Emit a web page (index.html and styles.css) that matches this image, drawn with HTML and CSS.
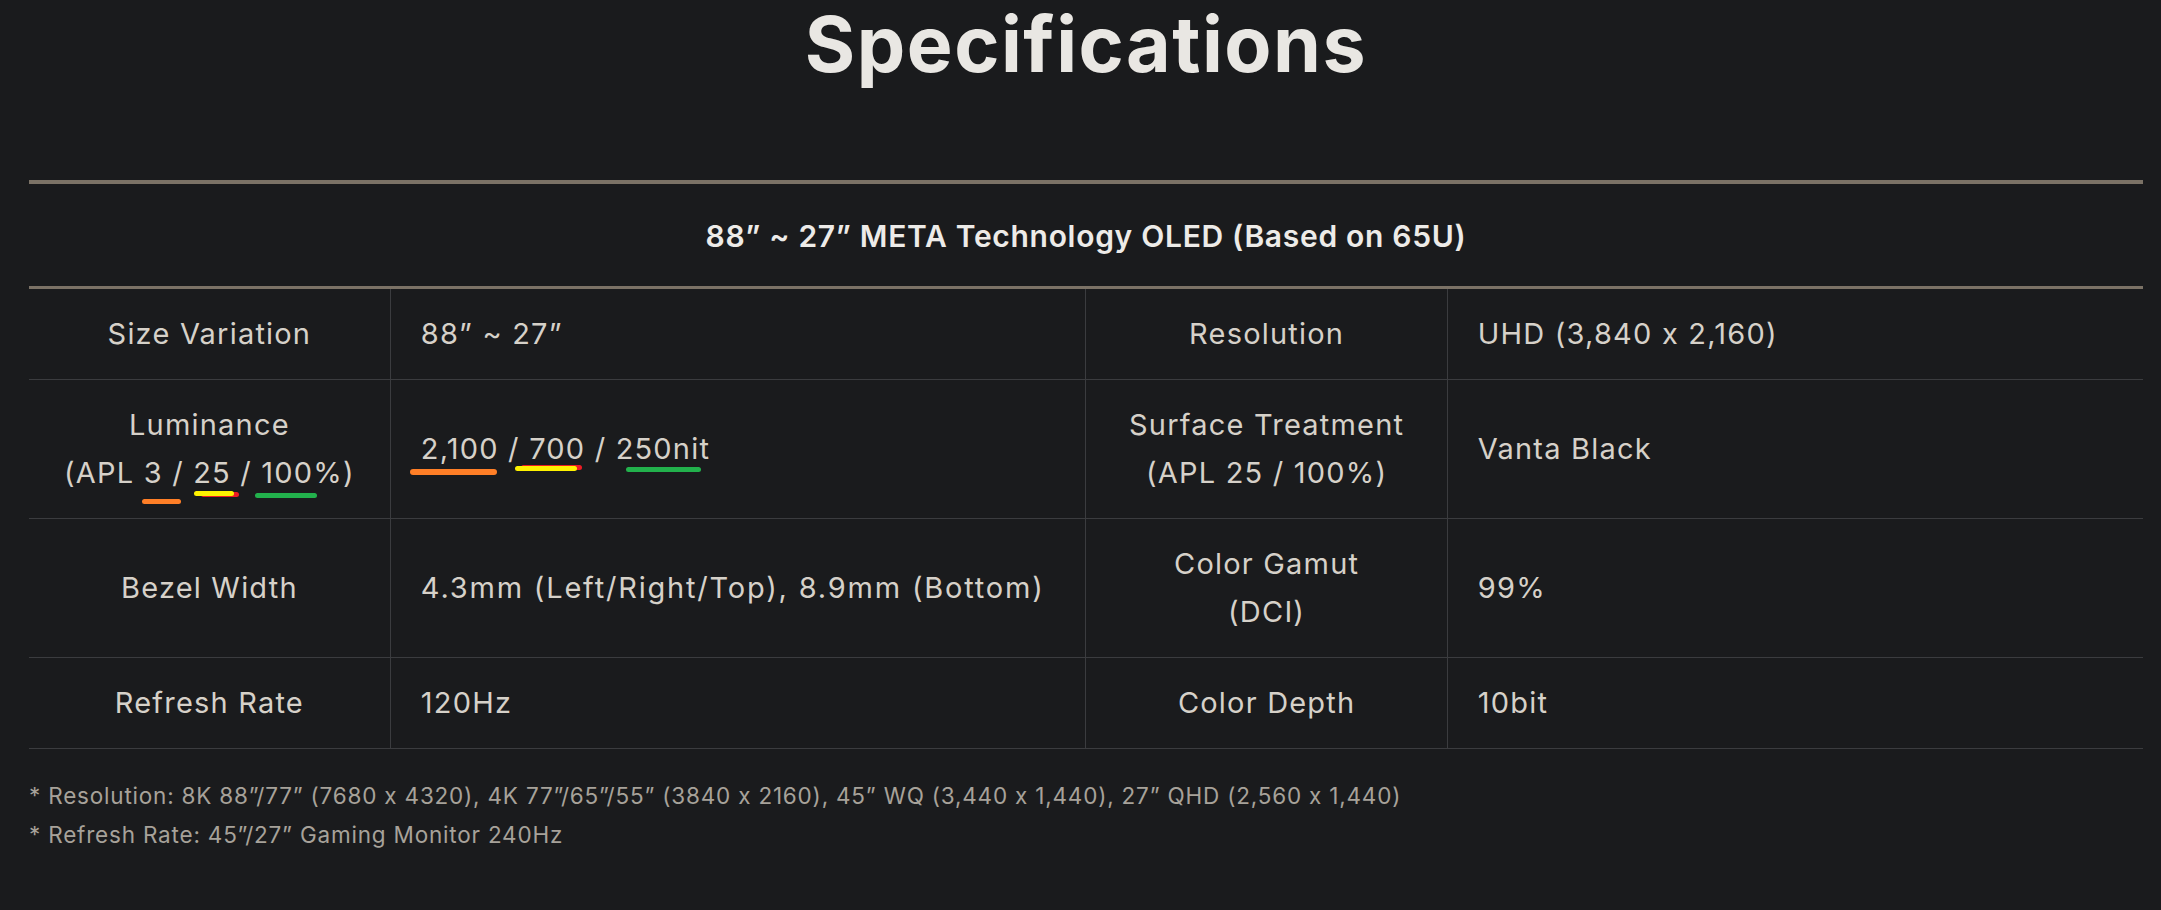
FILE: index.html
```html
<!DOCTYPE html>
<html lang="en">
<head>
<meta charset="utf-8">
<title>Specifications</title>
<link rel="stylesheet" href="styles.css">
</head>
<body>
<main class="page">
  <h1 class="title">Specifications</h1>
  <table class="spec">
    <colgroup>
      <col class="c-label"><col class="c-value"><col class="c-label"><col class="c-value">
    </colgroup>
    <thead>
      <tr><th colspan="4" class="head">88” ~ 27” META Technology OLED (Based on 65U)</th></tr>
    </thead>
    <tbody>
      <tr>
        <td class="lab">Size Variation</td>
        <td class="val">88” ~ 27”</td>
        <td class="lab">Resolution</td>
        <td class="val">UHD (3,840 x 2,160)</td>
      </tr>
      <tr>
        <td class="lab">Luminance<br>(APL <span class="mk mk-o1">3</span> / <span class="mk mk-y1">25</span> / <span class="mk mk-g1">100%</span>)</td>
        <td class="val"><span class="mk mk-o2">2,100</span> / <span class="mk mk-y2">700</span> / <span class="mk mk-g2">250nit</span></td>
        <td class="lab">Surface Treatment<br>(APL 25 / 100%)</td>
        <td class="val">Vanta Black</td>
      </tr>
      <tr>
        <td class="lab">Bezel Width</td>
        <td class="val wide">4.3mm (Left/Right/Top), 8.9mm (Bottom)</td>
        <td class="lab">Color Gamut<br>(DCI)</td>
        <td class="val">99%</td>
      </tr>
      <tr>
        <td class="lab">Refresh Rate</td>
        <td class="val">120Hz</td>
        <td class="lab">Color Depth</td>
        <td class="val">10bit</td>
      </tr>
    </tbody>
  </table>
  <div class="notes">
    <p>* Resolution: 8K 88”/77” (7680 x 4320), 4K 77”/65”/55” (3840 x 2160), 45” WQ (3,440 x 1,440), 27” QHD (2,560 x 1,440)</p>
    <p>* Refresh Rate: 45”/27” Gaming Monitor 240Hz</p>
  </div>
</main>
</body>
</html>
```
FILE: styles.css
```css
html, body {
  margin: 0;
  padding: 0;
  background: #1a1b1d;
}
body {
  font-family: "Inter", "Open Sans", "Liberation Sans", sans-serif;
  color: #d6d1c9;
}
.page {
  padding: 0 18px 40px 29px;
}
.title {
  margin: 0 0 92px;
  text-align: center;
  font-size: 77px;
  line-height: 88px;
  font-weight: 700;
  color: #e9e7e3;
  letter-spacing: 1.5px;
}
.spec {
  width: 2114px;
  border-collapse: collapse;
  table-layout: fixed;
}
.c-label { width: 361px; }
.c-value { width: 695px; }
.head {
  border-top: 4px solid #7b7266;
  border-bottom: 3px solid #7b7266;
  padding: 28px 0 26px;
  font-size: 30px;
  line-height: 48px;
  font-weight: 600;
  color: #edebe8;
  text-align: center;
  letter-spacing: 0.7px;
}
.spec td {
  border: 1px solid #3b3c3f;
  padding: 21px 0;
  font-size: 29px;
  line-height: 48px;
  letter-spacing: 1.2px;
  vertical-align: middle;
}
.spec td.wide { letter-spacing: 1.8px; }
.spec tbody tr:first-child td { border-top: none; }
.spec td:first-child { border-left: none; }
.spec td:last-child { border-right: none; }
.lab { text-align: center; }
.val { text-align: left; padding-left: 30px !important; }

.mk { position: relative; }
.mk::before, .mk::after {
  content: "";
  position: absolute;
  height: 5px;
  border-radius: 3px;
}
.mk-o1::after { background: #ff7f27; left: -2px; width: 39px; top: calc(100% + 9px); }
.mk-y1::before { background: #ed1c24; left: 8px; right: -8px; top: calc(100% + 2px); }
.mk-y1::after { background: #fff200; left: 1px; right: -3px; top: calc(100% + 1px); }
.mk-g1::after { background: #22b14c; left: -6px; width: 62px; top: calc(100% + 3px); }
.mk-o2::after { background: #ff7f27; left: -11px; right: 2px; top: calc(100% + 3px); height: 6px; }
.mk-y2::before { background: #ed1c24; left: -8px; right: 3px; top: calc(100% - 1px); }
.mk-y2::after { background: #fff200; left: -14px; right: 8px; top: calc(100% + 0px); }
.mk-g2::after { background: #22b14c; left: 10px; right: 9px; top: calc(100% + 1px); }

.notes {
  margin-top: 27px;
  font-size: 22.5px;
  line-height: 39px;
  color: #a7a29a;
  letter-spacing: 0.8px;
}
.notes p { margin: 0; }
```
